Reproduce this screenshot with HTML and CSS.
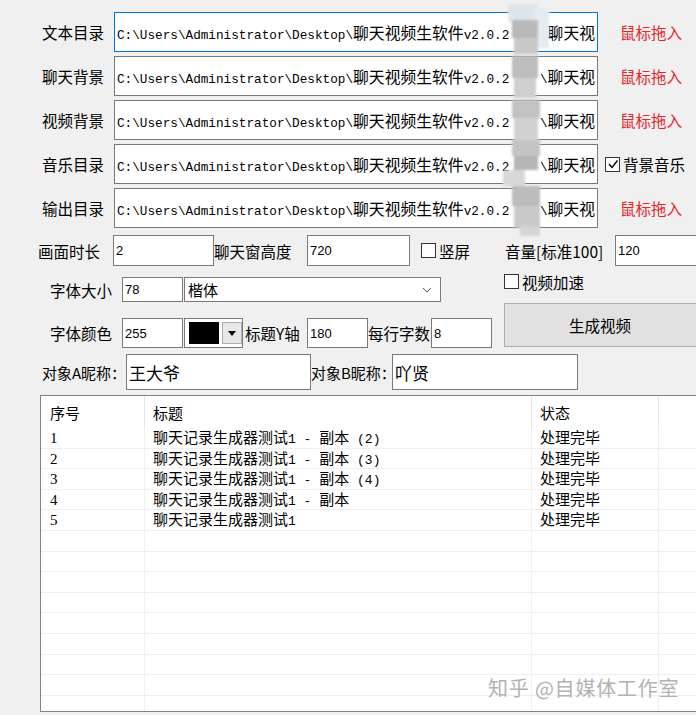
FILE: index.html
```html
<!DOCTYPE html>
<html>
<head>
    <meta charset="UTF-8">
    <title>聊天视频生成</title>
    <link rel="stylesheet" href="styles.css">
</head>
<body>
<div class="window">
    <div class="paths">
        <div class="path-row">
            <span class="label">文本目录</span>
            <div class="path-box focused"><span>C:\Users\Administrator\Desktop\<span class="cjk">聊天视频生软件</span>v2.0.2</span><span>\<span class="cjk">聊天视</span></span></div>
            <span class="drop">鼠标拖入</span>
        </div>
        <div class="path-row">
            <span class="label">聊天背景</span>
            <div class="path-box"><span>C:\Users\Administrator\Desktop\<span class="cjk">聊天视频生软件</span>v2.0.2</span><span>\<span class="cjk">聊天视</span></span></div>
            <span class="drop">鼠标拖入</span>
        </div>
        <div class="path-row">
            <span class="label">视频背景</span>
            <div class="path-box"><span>C:\Users\Administrator\Desktop\<span class="cjk">聊天视频生软件</span>v2.0.2</span><span>\<span class="cjk">聊天视</span></span></div>
            <span class="drop">鼠标拖入</span>
        </div>
        <div class="path-row">
            <span class="label">音乐目录</span>
            <div class="path-box"><span>C:\Users\Administrator\Desktop\<span class="cjk">聊天视频生软件</span>v2.0.2</span><span>\<span class="cjk">聊天视</span></span></div>
            <label class="check-label music">
                <span class="box"><svg width="12" height="12" viewBox="0 0 12 12"><polyline points="2,6 5,9.5 10.5,2.5" fill="none" stroke="#000" stroke-width="1.4"/></svg></span>背景音乐
            </label>
        </div>
        <div class="path-row">
            <span class="label">输出目录</span>
            <div class="path-box"><span>C:\Users\Administrator\Desktop\<span class="cjk">聊天视频生软件</span>v2.0.2</span><span>\<span class="cjk">聊天视</span></span></div>
            <span class="drop">鼠标拖入</span>
        </div>
    </div>

    <div class="opt-row r-time">
        <span class="lbl lbl-time">画面时长</span>
        <div class="field w-time">2</div>
        <span class="lbl lbl-height">聊天窗高度</span>
        <div class="field w-height">720</div>
        <label class="check-label portrait"><span class="box"></span>竖屏</label>
        <span class="lbl lbl-volume">音量[标准100]</span>
        <div class="field w-volume">120</div>
    </div>

    <div class="mid">
        <div class="mid-left">
            <div class="opt-row r-size">
                <span class="lbl lbl-font">字体大小</span>
                <div class="field w-small">78</div>
                <div class="combo">
                    <span>楷体</span>
                    <svg width="10" height="6" viewBox="0 0 10 6"><polyline points="1,1 5,5 9,1" fill="none" stroke="#555" stroke-width="1"/></svg>
                </div>
            </div>
            <div class="opt-row r-color">
                <span class="lbl lbl-font">字体颜色</span>
                <div class="field w-small">255</div>
                <div class="picker">
                    <span class="swatch"></span>
                    <span class="picker-btn"><svg width="8" height="5" viewBox="0 0 8 5"><polygon points="0,0 8,0 4,5" fill="#000"/></svg></span>
                </div>
                <span class="lbl lbl-title">标题Y轴</span>
                <div class="field w-small">180</div>
                <span class="lbl lbl-perline">每行字数</span>
                <div class="field w-small">8</div>
            </div>
        </div>
        <div class="mid-right">
            <label class="check-label speed"><span class="box"></span>视频加速</label>
            <button class="make" type="button">生成视频</button>
        </div>
    </div>

    <div class="opt-row r-name">
        <span class="lbl lbl-name-a">对象A昵称：</span>
        <div class="field name w-name-a">王大爷</div>
        <span class="lbl lbl-name-b">对象B昵称：</span>
        <div class="field name w-name-b">吖贤</div>
    </div>

    <div class="list">
        <div class="list-head"><div>序号</div><div>标题</div><div>状态</div><div></div></div>
        <div class="list-row"><div>1</div><div>聊天记录生成器测试<span class="lat">1 - </span>副本<span class="lat"> (2)</span></div><div>处理完毕</div><div></div></div>
        <div class="list-row"><div>2</div><div>聊天记录生成器测试<span class="lat">1 - </span>副本<span class="lat"> (3)</span></div><div>处理完毕</div><div></div></div>
        <div class="list-row"><div>3</div><div>聊天记录生成器测试<span class="lat">1 - </span>副本<span class="lat"> (4)</span></div><div>处理完毕</div><div></div></div>
        <div class="list-row"><div>4</div><div>聊天记录生成器测试<span class="lat">1 - </span>副本</div><div>处理完毕</div><div></div></div>
        <div class="list-row"><div>5</div><div>聊天记录生成器测试<span class="lat">1</span></div><div>处理完毕</div><div></div></div>
        <div class="list-row"><div></div><div></div><div></div><div></div></div>
        <div class="list-row"><div></div><div></div><div></div><div></div></div>
        <div class="list-row"><div></div><div></div><div></div><div></div></div>
        <div class="list-row"><div></div><div></div><div></div><div></div></div>
        <div class="list-row"><div></div><div></div><div></div><div></div></div>
        <div class="list-row"><div></div><div></div><div></div><div></div></div>
        <div class="list-row"><div></div><div></div><div></div><div></div></div>
        <div class="list-row"><div></div><div></div><div></div><div></div></div>
        <div class="list-row"><div></div><div></div><div></div><div></div></div>
    </div>

    <!-- pixelated blur that hides part of the path -->
    <svg class="smudge" width="56" height="240" viewBox="0 0 56 240">
        <defs><filter id="soft"><feGaussianBlur stdDeviation="1.2"/></filter></defs>
        <g filter="url(#soft)">
            <rect x="8" y="4" width="30" height="18" fill="#dde5ec"/>
            <rect x="35" y="8" width="14" height="40" fill="#e4ebf1"/>
            <rect x="12" y="20" width="26" height="18" fill="#b9b9b9"/>
            <rect x="14" y="38" width="24" height="16" fill="#c8c8c8"/>
            <rect x="12" y="56" width="26" height="22" fill="#bdbdbd"/>
            <rect x="14" y="78" width="22" height="20" fill="#cfcfcf"/>
            <rect x="12" y="100" width="28" height="18" fill="#c2c2c2"/>
            <rect x="14" y="118" width="24" height="22" fill="#d2d2d2"/>
            <rect x="12" y="140" width="28" height="16" fill="#c4c4c4"/>
            <rect x="14" y="156" width="24" height="14" fill="#b5b5b5"/>
            <rect x="3" y="170" width="22" height="16" fill="#d8d8d8"/>
            <rect x="12" y="186" width="28" height="20" fill="#bcbcbc"/>
            <rect x="14" y="206" width="26" height="22" fill="#c9c9c9"/>
            <rect x="20" y="226" width="20" height="10" fill="#d5d5d5"/>
        </g>
    </svg>

    <div class="watermark">知乎 @自媒体工作室</div>
</div>
</body>
</html>
```

FILE: styles.css
```css
body {
    margin: 0;
    background-color: #f0f0f0;
    color: #000;
    font-family: "Noto Sans CJK SC", sans-serif;
    overflow: hidden;
}

.window {
    position: relative;
    width: 720px;
    height: 715px;
}

/* path rows */
.paths {
    padding-top: 12px;
    display: flex;
    flex-direction: column;
    gap: 4px;
}

.path-row {
    display: flex;
    align-items: center;
    height: 40px;
}

.path-row .label {
    width: 104px;
    margin-right: 10px;
    text-align: right;
    font-size: 15.5px;
}

.path-box {
    box-sizing: border-box;
    width: 484px;
    height: 40px;
    padding: 0 2px;
    background: #fff;
    border: 1px solid #7a7a7a;
    display: flex;
    justify-content: space-between;
    align-items: center;
    overflow: hidden;
    white-space: nowrap;
    font-family: "Liberation Mono", "Noto Sans CJK SC", monospace;
    font-size: 12.7px;
}

.path-box.focused {
    border-color: #0078d7;
}

.cjk {
    font-family: "Noto Sans CJK SC", sans-serif;
    font-size: 15.8px;
}

.drop {
    margin-left: 22px;
    color: #e3262b;
    font-size: 15.5px;
}

/* checkboxes */
.check-label {
    display: flex;
    align-items: center;
    font-size: 15.5px;
}

.box {
    box-sizing: border-box;
    width: 15px;
    height: 15px;
    margin-right: 3px;
    border: 1px solid #333;
    background: #fff;
    display: flex;
    align-items: center;
    justify-content: center;
}

.check-label.music {
    margin-left: 7px;
}

/* option rows */
.opt-row {
    display: flex;
    align-items: center;
}

.lbl {
    font-size: 15.5px;
    white-space: nowrap;
}

.field {
    box-sizing: border-box;
    height: 100%;
    padding-left: 2px;
    background: #fff;
    border: 1px solid #7a7a7a;
    display: flex;
    align-items: center;
    font-family: "Liberation Sans", sans-serif;
    font-size: 13px;
}

.r-time {
    margin-top: 7px;
    height: 31px;
}

.lbl-time {
    width: 100px;
    margin-right: 13px;
    text-align: right;
}

.w-time { width: 101px; }

.lbl-height { width: 93px; }

.w-height { width: 103px; }

.check-label.portrait {
    width: 84px;
    margin-left: 11px;
}

.lbl-volume { width: 110px; }

.w-volume { width: 100px; }

.mid {
    display: flex;
    margin-top: 7px;
}

.mid-left {
    width: 504px;
    padding-top: 4px;
}

.r-size { height: 25px; }

.r-color {
    height: 30px;
    margin-top: 16px;
}

.lbl-font {
    width: 112px;
    margin-right: 10px;
    text-align: right;
}

.w-small { width: 61px; }

.combo {
    box-sizing: border-box;
    width: 257px;
    height: 100%;
    margin-left: 1px;
    padding: 0 8px 0 3px;
    background: #fff;
    border: 1px solid #7a7a7a;
    display: flex;
    justify-content: space-between;
    align-items: center;
    font-size: 15px;
}

.picker {
    box-sizing: border-box;
    width: 59px;
    height: 100%;
    margin-left: 1px;
    padding: 3px 0 3px 4px;
    background: #fff;
    border: 1px solid #7a7a7a;
    display: flex;
    gap: 3px;
}

.swatch {
    width: 30px;
    background: #000;
}

.picker-btn {
    flex: 1;
    background: #e8e8e8;
    border: 1px solid #adadad;
    display: flex;
    align-items: center;
    justify-content: center;
}

.lbl-title {
    width: 62px;
    padding-left: 2px;
}

.lbl-perline { width: 63px; }

.mid-right {
    width: 200px;
    display: flex;
    flex-direction: column;
}

.check-label.speed {
    height: 17px;
}

button.make {
    margin-top: 13px;
    height: 44px;
    width: 200px;
    background: #e1e1e1;
    border: 1px solid #adadad;
    font-family: "Noto Sans CJK SC", sans-serif;
    font-size: 15.5px;
    color: #000;
    padding: 0 8px 0 0;
}

.r-name {
    margin-top: 6px;
    height: 36px;
}

.lbl-name-a {
    width: 126px;
    text-align: right;
    font-size: 15px;
}

.lbl-name-b {
    width: 81px;
    font-size: 15px;
}

.field.name {
    font-family: "Noto Sans CJK SC", sans-serif;
    font-size: 17px;
}

.w-name-a { width: 185px; }

.w-name-b { width: 186px; }

/* result list */
.list {
    box-sizing: border-box;
    margin: 5px 0 0 40px;
    width: 680px;
    height: 317px;
    background: #fff;
    border: 1px solid #828282;
    overflow: hidden;
    font-size: 15px;
}

.list-head,
.list-row {
    display: grid;
    grid-template-columns: 104px 387px 127px 1fr;
}

.list-head {
    height: 32px;
    font-family: "Noto Sans CJK SC", sans-serif;
}

.list-head > div {
    display: flex;
    align-items: center;
    border-right: 1px solid #e5e5e5;
    padding-left: 8px;
}

.list-head > div:first-child {
    padding-left: 9px;
}

.list-row {
    box-sizing: border-box;
    height: 20.6px;
    border-bottom: 1px solid #efefef;
    font-family: "Liberation Serif", "Noto Sans CJK SC", serif;
}

.list-row > div {
    border-right: 1px solid #efefef;
    padding-left: 8px;
    line-height: 21.5px;
    white-space: pre;
    overflow: hidden;
}

.list-row > div:first-child {
    padding-left: 9px;
}

.list-row .lat {
    font-family: "Liberation Mono", monospace;
    font-size: 13px;
}

.smudge {
    position: absolute;
    left: 500px;
    top: 0;
}

.watermark {
    position: absolute;
    left: 488px;
    top: 673px;
    font-size: 20px;
    letter-spacing: 0.8px;
    color: #b2b2b2;
    text-shadow: 0 0 1px #fff;
    white-space: nowrap;
}
```
